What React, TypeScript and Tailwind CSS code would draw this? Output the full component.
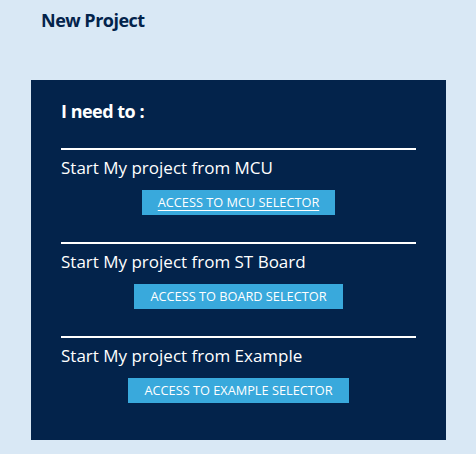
const sections = [
  { label: "Start My project from MCU", button: "ACCESS TO MCU SELECTOR", active: true },
  { label: "Start My project from ST Board", button: "ACCESS TO BOARD SELECTOR", active: false },
  { label: "Start My project from Example", button: "ACCESS TO EXAMPLE SELECTOR", active: false },
]

export default function App() {
  return (
    <div
      className="w-[476px] h-[454px] bg-[#d9e8f5] overflow-hidden"
      style={{ fontFamily: '"Open Sans", "Liberation Sans", sans-serif' }}
    >
      <h1 className="pl-[41px] pt-[8px] text-[18px] leading-[25px] font-bold tracking-[-0.5px] text-[#03234b]">New Project</h1>

      <div className="ml-[31px] mt-[47px] w-[415px] h-[360px] bg-[#03234b] px-[30px] pt-[19px]">
        <h2 className="text-[18px] leading-[25px] font-bold tracking-[-0.5px] text-white">I need to :</h2>

        <div className="mt-[24px] flex flex-col">
          {sections.map((s) => (
            <div key={s.label} className="border-t-2 border-white h-[94px] flex flex-col items-center">
              <div className="self-stretch pt-[6px] text-[17px] leading-[23px] text-white">{s.label}</div>
              <button className="mt-[11px] h-[25px] px-4 bg-[#39a9dc] text-white text-[12.75px] leading-[25px]">
                <span className={s.active ? "underline underline-offset-[3px]" : ""}>{s.button}</span>
              </button>
            </div>
          ))}
        </div>
      </div>
    </div>
  )
}
